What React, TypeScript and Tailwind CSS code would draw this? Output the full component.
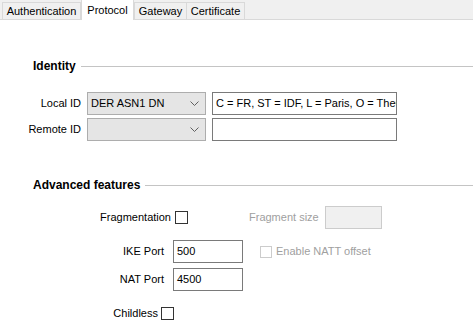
import React from "react";

function Chevron() {
  return (
    <svg width="9" height="5" viewBox="0 0 9 5" className="ml-auto mr-[6px]">
      <path d="M0.5 0.5 L4.5 4.5 L8.5 0.5" fill="none" stroke="#606060" strokeWidth="1" />
    </svg>
  );
}

function Heading({ title }: { title: string }) {
  return (
    <div className="flex items-center pl-[33px] h-[14px]">
      <span className="font-bold text-[12px] leading-[14px] text-black">{title}</span>
      <div className="flex-1 h-px bg-[#c4c4c4] ml-[5px]" />
    </div>
  );
}

export default function App() {
  return (
    <div
      className="w-[473px] h-[334px] bg-white overflow-hidden text-[11px] text-black"
      style={{ fontFamily: '"Liberation Sans", Arial, sans-serif' }}
    >
      {/* tab strip */}
      <div className="flex items-end h-[20px] bg-[#f0f0f0] border-b border-[#d9d9d9] pl-[2px]">
        <div className="w-[79px] h-[18px] -mb-px border border-[#d9d9d9] border-b-0 flex items-center justify-center">
          Authentication
        </div>
        <div className="w-[53px] h-[21px] -mb-px bg-white border border-[#d9d9d9] border-b-0 flex items-start justify-center pt-[2px]">
          Protocol
        </div>
        <div className="w-[53px] h-[18px] -mb-px border border-[#d9d9d9] border-b-0 flex items-center justify-center">
          Gateway
        </div>
        <div className="w-[58px] h-[18px] -mb-px border border-[#d9d9d9] border-l-0 border-b-0 flex items-center justify-center">
          Certificate
        </div>
      </div>

      <div className="mt-[39px]">
        <Heading title="Identity" />
      </div>

      <div className="mt-[19px] flex flex-col gap-[3px]">
        <div className="flex items-center h-[23px]">
          <span className="w-[81px] text-right">Local ID</span>
          <div className="ml-[6px] w-[119px] h-[23px] bg-[#e5e5e5] border border-[#adadad] flex items-center pl-[3px]">
            DER ASN1 DN
            <Chevron />
          </div>
          <div className="ml-[6px] w-[185px] h-[23px] border border-[#7a7a7a] flex items-center pl-[3px] overflow-hidden whitespace-nowrap">
            C = FR, ST = IDF, L = Paris, O = TheGreenBow
          </div>
        </div>
        <div className="flex items-center h-[23px]">
          <span className="w-[81px] text-right">Remote ID</span>
          <div className="ml-[6px] w-[119px] h-[23px] bg-[#e5e5e5] border border-[#adadad] flex items-center pl-[3px]">
            <Chevron />
          </div>
          <div className="ml-[6px] w-[185px] h-[23px] border border-[#7a7a7a]" />
        </div>
      </div>

      <div className="mt-[37px]">
        <Heading title="Advanced features" />
      </div>

      <div className="mt-[14px] flex items-center h-[23px]">
        <span className="w-[171px] text-right">Fragmentation</span>
        <div className="ml-[4px] w-[13px] h-[13px] border border-[#333333] bg-white" />
        <span className="ml-[61px] w-[70px] text-[#a0a0a0]">Fragment size</span>
        <div className="ml-[6px] w-[57px] h-[23px] bg-[#f0f0f0] border border-[#cccccc]" />
      </div>

      <div className="mt-[11px] flex flex-col gap-[5px]">
        <div className="flex items-center h-[23px]">
          <span className="w-[164px] text-right">IKE Port</span>
          <div className="ml-[9px] w-[70px] h-[23px] border border-[#7a7a7a] flex items-center pl-[3px]">500</div>
          <div className="ml-[17px] w-[12px] h-[12px] border border-[#cccccc] bg-white" />
          <span className="ml-[4px] text-[#a0a0a0]">Enable NATT offset</span>
        </div>
        <div className="flex items-center h-[23px]">
          <span className="w-[164px] text-right">NAT Port</span>
          <div className="ml-[9px] w-[70px] h-[23px] border border-[#7a7a7a] flex items-center pl-[3px]">4500</div>
        </div>
      </div>

      <div className="mt-[16px] flex items-center h-[13px]">
        <span className="w-[158px] text-right">Childless</span>
        <div className="ml-[3px] w-[13px] h-[13px] border border-[#333333] bg-white" />
      </div>
    </div>
  );
}
